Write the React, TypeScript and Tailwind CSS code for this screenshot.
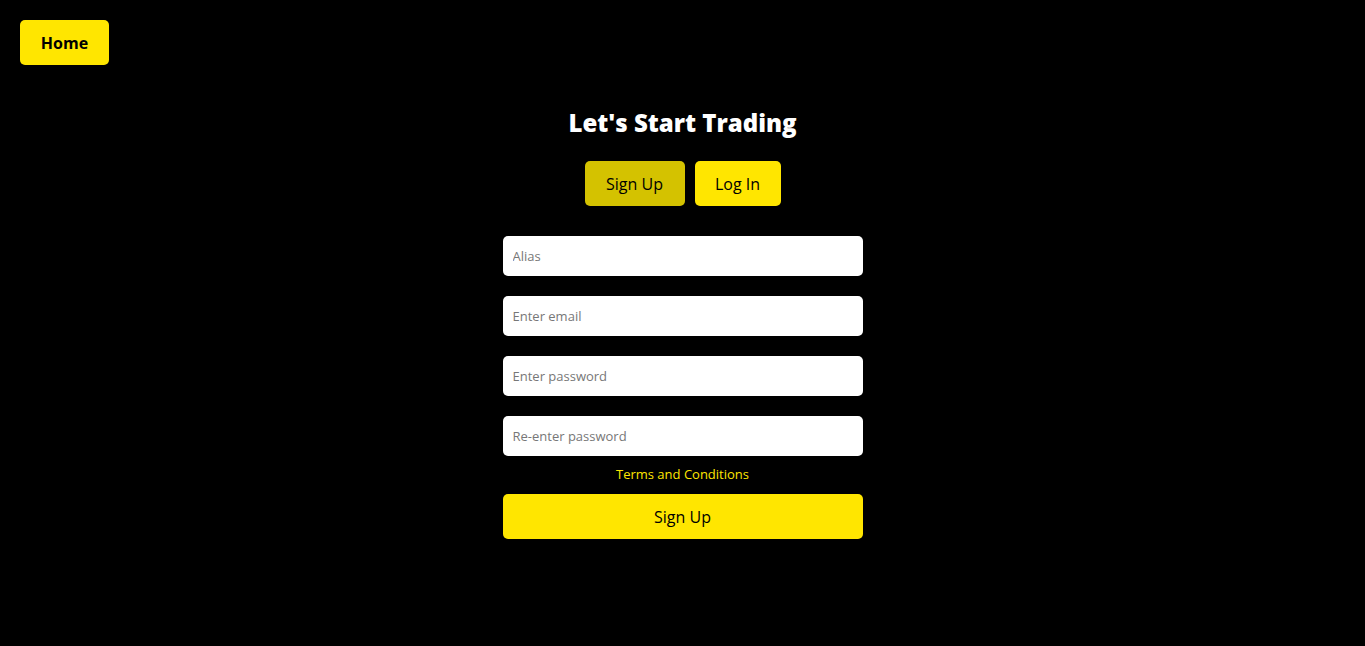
import React from "react";

export default function App() {
  const font = { fontFamily: '"Open Sans", "Noto Sans", sans-serif' };
  return (
    <div className="min-h-[646px] w-full bg-black" style={font}>
      <div className="pt-5 pl-5">
        <button className="h-[45px] w-[89px] rounded-[5px] bg-[#ffe600] text-[16px] font-bold text-black">
          Home
        </button>
      </div>
      <div className="flex flex-col items-center">
        <h1 className="mt-[40px] text-[24px] font-extrabold leading-[36px] text-white">Let's Start Trading</h1>
        <div className="mt-[20px] flex gap-[10px]">
          <button className="h-[45px] w-[100px] rounded-[5px] bg-[#d4c200] text-[16px] text-black">Sign Up</button>
          <button className="h-[45px] w-[86px] rounded-[5px] bg-[#ffe600] text-[16px] text-black">Log In</button>
        </div>
        <div className="mt-[30px] flex w-[360px] flex-col">
          <div className="flex flex-col gap-[20px]">
            {["Alias", "Enter email", "Enter password", "Re-enter password"].map((p) => (
              <input
                key={p}
                placeholder={p}
                className="h-[40px] w-full rounded-[5px] bg-white px-[10px] text-[13px] text-black outline-none placeholder:text-[#777777]"
                style={font}
              />
            ))}
          </div>
          <div className="mt-[9px] text-center text-[13px] leading-[18px] text-[#ffe600]">Terms and Conditions</div>
          <button className="mt-[11px] h-[45px] w-full rounded-[5px] bg-[#ffe600] text-[16px] text-black">Sign Up</button>
        </div>
      </div>
    </div>
  );
}
